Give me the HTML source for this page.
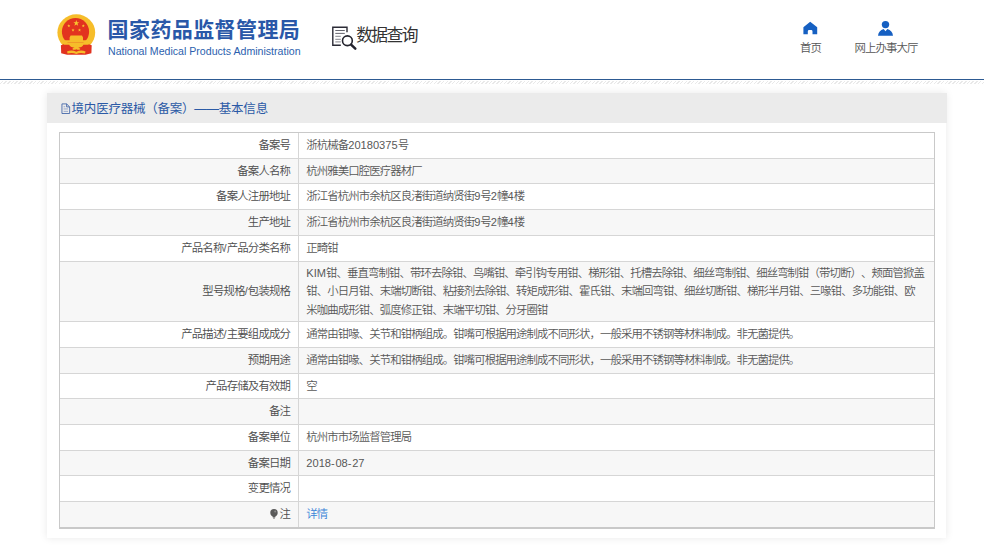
<!DOCTYPE html>
<html lang="zh-CN">
<head>
<meta charset="utf-8">
<title>国家药品监督管理局 数据查询</title>
<style>
html,body{margin:0;padding:0;}
body{width:984px;height:545px;overflow:hidden;background:#fff;position:relative;
 font-family:"Liberation Sans","Noto Sans CJK SC",sans-serif;font-size:11.4px;letter-spacing:-0.9px;color:#585858;font-weight:350;text-spacing-trim:space-all;}
.n{font-family:"Liberation Sans",sans-serif;font-size:11.1px;letter-spacing:0;font-weight:400;color:#585858;}
#hdr{position:absolute;left:0;top:0;width:984px;height:79px;background:#fff;}
#blue{position:absolute;left:0;top:78.8px;width:984px;height:1.2px;background:#2d5a92;}
#stripe{position:absolute;left:0;top:81px;width:984px;height:3px;background:repeating-linear-gradient(135deg,#fff 0,#fff 1.6px,#e9e9e9 1.6px,#e9e9e9 2.6px);}
#emb{position:absolute;left:50px;top:8px;width:55px;height:54px;}
#t1{position:absolute;left:107.6px;top:11.6px;font-size:21px;font-weight:700;color:#2958a8;white-space:nowrap;line-height:36px;letter-spacing:0.4px;}
#t2{position:absolute;left:108px;top:44.2px;font-size:10.6px;color:#2c5fae;white-space:nowrap;line-height:14px;letter-spacing:0;font-weight:400;font-family:"Liberation Sans",sans-serif;}
#q{position:absolute;left:356.2px;top:22.3px;font-size:16.8px;color:#333;white-space:nowrap;line-height:28px;letter-spacing:-1.6px;font-weight:400;}
#qi{position:absolute;left:325px;top:18px;width:40px;height:40px;}
.nav{position:absolute;top:40px;font-size:11.4px;color:#555;white-space:nowrap;line-height:16px;text-align:center;}
.ni{position:absolute;}
#panel{position:absolute;left:47px;top:93px;width:899.4px;height:444.5px;background:#fff;box-shadow:0 0 8px rgba(0,0,0,.095);}
#ph{position:absolute;left:0;top:0;width:900px;height:30px;background:#ebebeb;}
#pt{position:absolute;left:24.6px;top:1.3px;line-height:30px;font-size:12.5px;letter-spacing:-0.23px;font-weight:400;color:#2b5aa6;white-space:nowrap;}
#pi{position:absolute;left:13.6px;top:9.8px;width:10px;height:12px;}
#tbl{position:absolute;left:12px;top:39px;width:874px;height:394px;border:1px solid #c9c9c9;border-bottom:2px solid #c9c9c9;background:#fff;}
.r{position:absolute;left:0;width:874px;}
.hl{position:absolute;left:0;width:874px;height:1px;background:#d6d6d6;}
.k{position:absolute;left:0;top:0;bottom:0;width:239px;border-right:1px solid #d6d6d6;box-sizing:border-box;display:flex;align-items:center;justify-content:flex-end;padding-right:7.8px;white-space:nowrap;line-height:18.3px;letter-spacing:-0.8px;color:#4c4c4c;}
.v{position:absolute;left:239px;top:0;bottom:0;right:0;display:flex;align-items:center;padding-left:7.3px;white-space:nowrap;line-height:18.3px;}
.lnk{color:#3a84d8;}
.bulb{display:inline-block;width:8px;height:10px;vertical-align:-0.2px;margin-right:1.2px;}
.hy{letter-spacing:0.7px;}
</style>
</head>
<body>
<div id="hdr">
 <svg id="emb" viewBox="0 0 55 54" width="55" height="54">
  <ellipse cx="26.3" cy="24.6" rx="18.9" ry="18.3" fill="#f6bd2a"/>
  <path d="M10.9 37.3 L14.5 36 L38.1 36 L41.7 37.3 L41.4 45.2 L35.5 46.7 L17.1 46.7 L11.2 45.2 Z" fill="#e1321f"/>
  <circle cx="25.5" cy="23.7" r="13.6" fill="#e2331f"/>
  <path d="M12.9 34.4 L39.7 34.4 L38.4 36.8 L33.4 36.8 Q32.6 39.6 26.3 39.7 Q20 39.6 19.2 36.8 L14.2 36.8 Z" fill="#f6bd2a"/>
  <path d="M14.8 32.2 H37.8 V34.6 H14.8 Z M19.6 29.4 H33 V32.4 H19.6 Z M20.6 27.4 H32 L33 29.5 H19.6 Z" fill="#f6bd2a"/>
  <path d="M22.2 41 Q26.3 36 30.4 41 Q28.5 42.6 26.3 41.2 Q24.1 42.6 22.2 41 Z" fill="#f6bd2a"/>
  <path d="M17 43.6 Q21.5 41.4 26.3 43.8 Q31.1 41.4 35.6 43.6 L35 45.6 Q30.6 44 26.3 46 Q22 44 17.6 45.6 Z" fill="#f6bd2a"/>
  <g fill="#f8c630">
   <path d="M26.3 12.1 l0.75 2.1 2.2 0.05 -1.75 1.35 0.65 2.15 -1.85 -1.3 -1.85 1.3 0.65 -2.15 -1.75 -1.35 2.2 -0.05z"/>
   <path d="M18.8 16.2 l0.4 1.1 1.15 0.03 -0.9 0.7 0.33 1.12 -0.98 -0.67 -0.98 0.67 0.33 -1.12 -0.9 -0.7 1.15 -0.03z"/>
   <path d="M33.3 16.2 l0.4 1.1 1.15 0.03 -0.9 0.7 0.33 1.12 -0.98 -0.67 -0.98 0.67 0.33 -1.12 -0.9 -0.7 1.15 -0.03z"/>
   <path d="M23 20.5 l0.4 1.1 1.15 0.03 -0.9 0.7 0.33 1.12 -0.98 -0.67 -0.98 0.67 0.33 -1.12 -0.9 -0.7 1.15 -0.03z"/>
   <path d="M29.5 20.5 l0.4 1.1 1.15 0.03 -0.9 0.7 0.33 1.12 -0.98 -0.67 -0.98 0.67 0.33 -1.12 -0.9 -0.7 1.15 -0.03z"/>
  </g>
 </svg>
 <div id="t1">国家药品监督管理局</div>
 <div id="t2">National Medical Products Administration</div>
 <svg id="qi" viewBox="0 0 40 40" width="40" height="40">
  <path d="M22 14.2 V9.3 H7.8 V27.2 H15.8" fill="none" stroke="#2b2b36" stroke-width="1.4"/>
  <path d="M10.3 12.5 H19.8 M10.3 15.4 H19.8" stroke="#55555f" stroke-width="0.9"/>
  <path d="M10.3 18.3 H15.8 M10.3 21.3 H15.8 M10.3 23.9 H15.8" stroke="#77777f" stroke-width="0.9"/>
  <circle cx="22.4" cy="22.75" r="4.9" fill="#fff" stroke="#23232d" stroke-width="1.6"/>
  <path d="M26.1 26.6 L30.3 30.6" stroke="#23232d" stroke-width="2.5" stroke-linecap="round"/>
 </svg>
 <div id="q">数据查询</div>
 <svg class="ni" style="left:800px;top:18px" width="22" height="20" viewBox="0 0 22 20">
  <path d="M10.2 3.7 L17.2 9.3 V16.2 H12.5 V13.4 Q12.5 12 11.2 12 H9.1 Q7.8 12 7.8 13.4 V16.2 H3.4 V9.3 Z" fill="#1660c2"/>
 </svg>
 <svg class="ni" style="left:874px;top:18px" width="24" height="20" viewBox="0 0 24 20">
  <circle cx="11.5" cy="6.6" r="3.7" fill="#1660c2"/>
  <path d="M4 17.7 Q4.6 12.6 9.6 11 L11.5 13.2 L13.4 11 Q18.4 12.6 19 17.7 Z" fill="#1660c2"/>
 </svg>
 <div class="nav" style="left:790px;width:41px;">首页</div>
 <div class="nav" style="left:846px;width:80px;">网上办事大厅</div>
</div>
<div id="blue"></div>
<div id="stripe"></div>
<div id="panel">
 <div id="ph"><svg id="pi" viewBox="0 0 10 12" width="10" height="12"><path d="M0.95 0.9 H5.6 L8.65 3.9 V10.5 H0.95 Z M5.6 0.9 V3.9 H8.65" fill="none" stroke="#3d62a6" stroke-width="0.85"/><path d="M2.6 3.75 H4.2 M2.6 5.95 H7 M2.6 8.35 H7" stroke="#7d93c0" stroke-width="0.75"/></svg><div id="pt">境内医疗器械（备案）——基本信息</div></div>
 <div id="tbl">
<div class="r" style="top:0px;height:25px;background:#fff"><div class="k"><span>备案号</span></div><div class="v"><span>浙杭械备<span class='n'>20180375</span>号</span></div></div>
<div class="hl" style="top:25px"></div>
<div class="r" style="top:26px;height:24px;background:#f7f7f7"><div class="k"><span>备案人名称</span></div><div class="v"><span>杭州雅美口腔医疗器材厂</span></div></div>
<div class="hl" style="top:50px"></div>
<div class="r" style="top:51px;height:25px;background:#fff"><div class="k"><span>备案人注册地址</span></div><div class="v"><span>浙江省杭州市余杭区良渚街道纳贤街<span class='n'>9</span>号<span class='n'>2</span>幢<span class='n'>4</span>楼</span></div></div>
<div class="hl" style="top:76px"></div>
<div class="r" style="top:77px;height:25px;background:#f7f7f7"><div class="k"><span>生产地址</span></div><div class="v"><span>浙江省杭州市余杭区良渚街道纳贤街<span class='n'>9</span>号<span class='n'>2</span>幢<span class='n'>4</span>楼</span></div></div>
<div class="hl" style="top:102px"></div>
<div class="r" style="top:103px;height:25px;background:#fff"><div class="k"><span>产品名称<span class='n'>/</span>产品分类名称</span></div><div class="v"><span>正畸钳</span></div></div>
<div class="hl" style="top:128px"></div>
<div class="r multi" style="top:129px;height:59px;background:#f7f7f7"><div class="k"><span>型号规格<span class='n'>/</span>包装规格</span></div><div class="v"><span><span class='n'>KIM</span>钳、垂直弯制钳、带环去除钳、鸟嘴钳、牵引钩专用钳、梯形钳、托槽去除钳、细丝弯制钳、细丝弯制钳（带切断）、颊面管掀盖<br>钳、小日月钳、末端切断钳、粘接剂去除钳、转矩成形钳、霍氏钳、末端回弯钳、细丝切断钳、梯形半月钳、三喙钳、多功能钳、欧<br>米咖曲成形钳、弧度修正钳、末端平切钳、分牙圈钳</span></div></div>
<div class="hl" style="top:188px"></div>
<div class="r" style="top:189px;height:25px;background:#fff"><div class="k"><span>产品描述<span class='n'>/</span>主要组成成分</span></div><div class="v"><span>通常由钳喙、关节和钳柄组成。钳嘴可根据用途制成不同形状，一般采用不锈钢等材料制成。非无菌提供。</span></div></div>
<div class="hl" style="top:214px"></div>
<div class="r" style="top:215px;height:25px;background:#f7f7f7"><div class="k"><span>预期用途</span></div><div class="v"><span>通常由钳喙、关节和钳柄组成。钳嘴可根据用途制成不同形状，一般采用不锈钢等材料制成。非无菌提供。</span></div></div>
<div class="hl" style="top:240px"></div>
<div class="r" style="top:241px;height:24px;background:#fff"><div class="k"><span>产品存储及有效期</span></div><div class="v"><span>空</span></div></div>
<div class="hl" style="top:265px"></div>
<div class="r" style="top:266px;height:25px;background:#f7f7f7"><div class="k"><span>备注</span></div><div class="v"><span></span></div></div>
<div class="hl" style="top:291px"></div>
<div class="r" style="top:292px;height:25px;background:#fff"><div class="k"><span>备案单位</span></div><div class="v"><span>杭州市市场监督管理局</span></div></div>
<div class="hl" style="top:317px"></div>
<div class="r" style="top:318px;height:24px;background:#f7f7f7"><div class="k"><span>备案日期</span></div><div class="v"><span><span class='n'>2018<span class='hy'>-</span>08<span class='hy'>-</span>27</span></span></div></div>
<div class="hl" style="top:342px"></div>
<div class="r" style="top:343px;height:25px;background:#fff"><div class="k"><span>变更情况</span></div><div class="v"><span></span></div></div>
<div class="hl" style="top:368px"></div>
<div class="r" style="top:369px;height:25px;background:#f7f7f7"><div class="k"><span><svg class='bulb' viewBox='0 0 8 10' width='8' height='10'><circle cx='4' cy='3.8' r='3.7' fill='#5a5a5a'/><path d='M2.4 6.5 H5.6 L5.2 8.6 H2.8 Z' fill='#5a5a5a'/><path d='M3 9.2 H5' stroke='#777' stroke-width='0.8'/><circle cx='5.2' cy='2.6' r='1' fill='#8a8a8a'/></svg>注</span></div><div class="v"><span><a class='lnk'>详情</a></span></div></div>
 </div>
</div>
</body>
</html>
